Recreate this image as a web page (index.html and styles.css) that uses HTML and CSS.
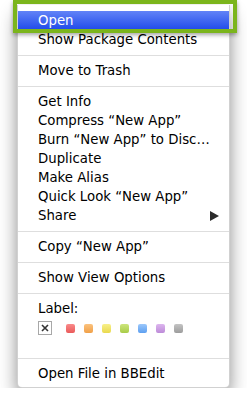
FILE: index.html
```html
<!DOCTYPE html>
<html lang="en">
<head>
    <meta charset="UTF-8">
    <meta name="viewport" content="width=device-width, initial-scale=1.0">
    <title>Context Menu</title>
    <link rel="stylesheet" href="styles.css">
</head>
<body>
    <div class="stage">
        <ul class="menu">
            <li class="item selected">Open</li>
            <li class="item">Show Package Contents</li>
            <li class="sep"></li>
            <li class="item">Move to Trash</li>
            <li class="sep"></li>
            <li class="item">Get Info</li>
            <li class="item">Compress “New App”</li>
            <li class="item">Burn “New App” to Disc…</li>
            <li class="item">Duplicate</li>
            <li class="item">Make Alias</li>
            <li class="item">Quick Look “New App”</li>
            <li class="item submenu">
                <span>Share</span>
                <svg class="arrow" width="9" height="10" viewBox="0 0 9 10"><polygon points="0,0 9,5 0,10" fill="#2b2b2b"/></svg>
            </li>
            <li class="sep"></li>
            <li class="item">Copy “New App”</li>
            <li class="sep"></li>
            <li class="item">Show View Options</li>
            <li class="sep"></li>
            <li class="item label">Label:</li>
            <li class="swatches">
                <span class="none">
                    <svg width="8" height="8" viewBox="0 0 8 8"><path d="M1 1 L7 7 M7 1 L1 7" stroke="#333" stroke-width="1.6"/></svg>
                </span>
                <span class="swatch red"></span>
                <span class="swatch orange"></span>
                <span class="swatch yellow"></span>
                <span class="swatch green"></span>
                <span class="swatch blue"></span>
                <span class="swatch purple"></span>
                <span class="swatch gray"></span>
            </li>
            <li class="sep"></li>
            <li class="item">Open File in BBEdit</li>
        </ul>
        <!-- highlight box drawn over the first item -->
        <div class="callout"></div>
    </div>
</body>
</html>
```

FILE: styles.css
```css
body {
    margin: 0;
    padding: 0;
    background-color: #ffffff;
    font-family: "DejaVu Sans", "Liberation Sans", sans-serif;
}
.stage {
    position: relative;
    padding: 5px 0 0 17px;
}
.menu {
    list-style: none;
    margin: 0;
    padding: 6px 0 4px;
    width: 213px;
    box-sizing: border-box;
    background-color: #ffffff;
    border: 1px solid rgba(0, 0, 0, 0.18);
    border-top: none;
    border-radius: 0 0 5px 5px;
    box-shadow: 0 9px 18px rgba(0, 0, 0, 0.45);
}
.item {
    height: 19px;
    line-height: 19px;
    padding: 0 0 0 20px;
    font-size: 13.3px;
    color: #000000;
    white-space: nowrap;
}
.selected {
    color: #ffffff;
    background: linear-gradient(#6283f7, #1f4aea);
}
.submenu {
    display: flex;
    align-items: center;
    justify-content: space-between;
    padding-right: 10px;
}
.sep {
    height: 1px;
    margin: 6px 0 5px;
    background-color: #dedede;
}
.label {
    height: 19px;
}
.swatches {
    display: flex;
    align-items: center;
    height: 34px;
    box-sizing: border-box;
    padding: 3px 0 17px 20px;
    gap: 9px;
}
.none {
    display: flex;
    align-items: center;
    justify-content: center;
    width: 14px;
    height: 14px;
    box-sizing: border-box;
    border: 1px solid #a8a8a8;
    background-color: #ffffff;
    margin-right: 5px;
}
.swatch {
    width: 9px;
    height: 9px;
    border-radius: 2px;
}
.red { background: linear-gradient(#f98a8a, #ea5a5a); }
.orange { background: linear-gradient(#fbc27e, #f0a048); }
.yellow { background: linear-gradient(#f8f08a, #e9d94e); }
.green { background: linear-gradient(#cde57c, #a8cc48); }
.blue { background: linear-gradient(#9cc8fb, #5d9ff0); }
.purple { background: linear-gradient(#dcb5ee, #bd8bd8); }
.gray { background: linear-gradient(#c4c4c4, #9c9c9c); }
.callout {
    position: absolute;
    left: 13px;
    top: 0;
    width: 224px;
    height: 33px;
    box-sizing: border-box;
    border: 4px solid #7bb51c;
    box-shadow: 0 2px 4px rgba(0, 0, 0, 0.35);
}
```
